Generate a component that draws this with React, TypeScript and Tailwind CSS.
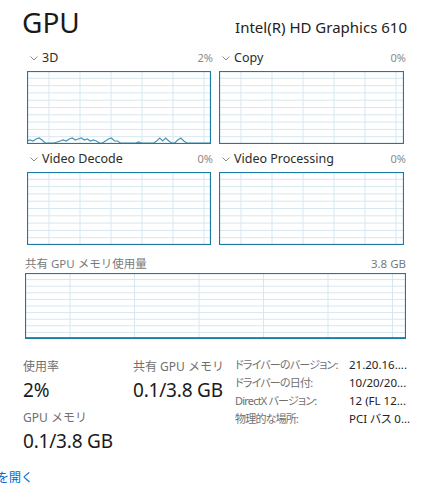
import React from 'react';

const BORDER = '#1a7aa3';
const GRID = '#d6e7f0';

// 3D engine usage, height in px per sample
const usage3d: number[] = [
  2, 3, 2, 4, 5, 3, 0, 0, 0, 0, 1, 2, 3, 2, 4, 5, 3, 4, 5, 3, 4, 2, 3, 2, 0, 0, 2, 4, 5, 2, 2,
  0, 0, 0, 0, 0, 0, 1, 0, 0, 0, 0, 0, 2, 5, 2, 5, 2, 0, 0, 3, 5, 2, 0, 0, 0, 0, 0, 0, 0, 0, 0,
];

function Chevron() {
  return (
    <svg width="8" height="5" viewBox="0 0 8 5" className="shrink-0">
      <path d="M0.5 0.5 L4 4 L7.5 0.5" fill="none" stroke="#8a8a8a" strokeWidth="1" />
    </svg>
  );
}

function Graph({
  width,
  height,
  cols,
  colStart,
  data,
  fill,
}: {
  width: number;
  height: number;
  cols: number;
  colStart: number;
  data?: number[];
  fill?: number;
}) {
  const rows = 10;
  const vlines: number[] = [];
  for (let x = colStart; x < width; x += cols) vlines.push(x);
  const hlines: number[] = [];
  for (let i = 1; i < rows; i++) hlines.push((height / rows) * i);

  const pts = data
    ? data.map((h, i) => `${(i * width) / (data.length - 1)},${height - 1 - h}`).join(' ')
    : '';

  return (
    <svg width={width} height={height} className="block">
      <rect x="0" y="0" width={width} height={height} fill="#fff" />
      {hlines.map((y) => (
        <line key={`h${y}`} x1="0" x2={width} y1={y} y2={y} stroke={GRID} strokeWidth="1" />
      ))}
      {vlines.map((x) => (
        <line key={`v${x}`} x1={x} x2={x} y1="0" y2={height} stroke={GRID} strokeWidth="1" />
      ))}
      {data && <polyline points={pts} fill="none" stroke="#4c93b4" strokeWidth="1.2" />}
      {fill !== undefined && (
        <rect x="0" y={height - fill} width={width} height={fill} fill={BORDER} opacity="0.85" />
      )}
      <rect x="0.5" y="0.5" width={width - 1} height={height - 1} fill="none" stroke={BORDER} strokeWidth="1.2" />
    </svg>
  );
}

function EngineLabel({ name, pct }: { name: string; pct: string }) {
  return (
    <div className="h-[14px] flex items-center justify-between">
      <div className="flex items-center gap-[4px] pl-[3px]">
        <Chevron />
        <span className="text-[12.5px] leading-[14px] text-[#2b2b2b]">{name}</span>
      </div>
      <span className="text-[11px] leading-[14px] text-[#8a8a8a] -mr-[2px]">{pct}</span>
    </div>
  );
}

const details = [
  ['ドライバーのバージョン:', '21.20.16....'],
  ['ドライバーの日付:', '10/20/20...'],
  ['DirectX バージョン:', '12 (FL 12...'],
  ['物理的な場所:', 'PCI バス 0...'],
];

export default function App() {
  return (
    <div className="w-[433px] h-[483px] overflow-hidden bg-white text-[#1a1a1a] font-['Noto_Sans','Noto_Sans_CJK_JP',sans-serif]">
      <div className="pl-[22px] pr-[26px] pt-[5px]">
        <div className="flex items-baseline justify-between">
          <h1 className="text-[28px] leading-[34px] font-normal text-[#1a1a1a]">GPU</h1>
          <span className="text-[15px] text-[#222]">Intel(R) HD Graphics 610</span>
        </div>

        <div className="ml-[5px] mt-[12px] grid grid-cols-[184px_185px] gap-x-[8px]">
          <div>
            <EngineLabel name="3D" pct="2%" />
            <div className="mt-[6px]">
              <Graph width={184} height={73} cols={31} colStart={22} data={usage3d} />
            </div>
          </div>
          <div>
            <EngineLabel name="Copy" pct="0%" />
            <div className="mt-[6px]">
              <Graph width={185} height={73} cols={31} colStart={22} />
            </div>
          </div>
          <div className="mt-[8px]">
            <EngineLabel name="Video Decode" pct="0%" />
            <div className="mt-[6px]">
              <Graph width={184} height={73} cols={31} colStart={22} />
            </div>
          </div>
          <div className="mt-[8px]">
            <EngineLabel name="Video Processing" pct="0%" />
            <div className="mt-[6px]">
              <Graph width={185} height={73} cols={31} colStart={22} />
            </div>
          </div>
        </div>

        <div className="ml-[3px] mt-[12px] w-[381px]">
          <div className="h-[14px] flex items-center justify-between text-[11.5px] text-[#7a7a7a] leading-[14px]">
            <span>共有 GPU メモリ使用量</span>
            <span>3.8 GB</span>
          </div>
          <div className="mt-[2px]">
            <Graph width={381} height={66} cols={64.5} colStart={45} fill={2} />
          </div>
        </div>

        <div className="mt-[20px] ml-[1px] flex">
          <div className="w-[110px] shrink-0">
            <div className="text-[12px] leading-[16px] text-[#707070]">使用率</div>
            <div className="mt-[2px] text-[19px] leading-[26px] tracking-[-0.2px]">2%</div>
            <div className="mt-[7px] text-[12px] leading-[16px] text-[#707070]">GPU メモリ</div>
            <div className="mt-[2px] text-[19px] leading-[26px] tracking-[-0.2px] whitespace-nowrap">0.1/3.8 GB</div>
          </div>
          <div className="w-[102px] shrink-0">
            <div className="text-[12px] leading-[16px] text-[#707070]">共有 GPU メモリ</div>
            <div className="mt-[2px] text-[19px] leading-[26px] tracking-[-0.2px] whitespace-nowrap">0.1/3.8 GB</div>
          </div>
          <div className="-mt-[3px] flex flex-col shrink-0">
            {details.map(([k, v]) => (
              <div key={k} className="flex h-[18px] items-center whitespace-nowrap">
                <span className="w-[114px] shrink-0 text-[11px] text-[#707070] [font-feature-settings:'palt'] tracking-[-0.8px]">{k}</span>
                <span className="text-[11.5px] text-[#222] [font-feature-settings:'palt']">{v}</span>
              </div>
            ))}
          </div>
        </div>
      </div>

      <div className="mt-[17px] -ml-[3px] text-[12px] leading-[14px] text-[#0066cc]">を開く</div>
    </div>
  );
}
